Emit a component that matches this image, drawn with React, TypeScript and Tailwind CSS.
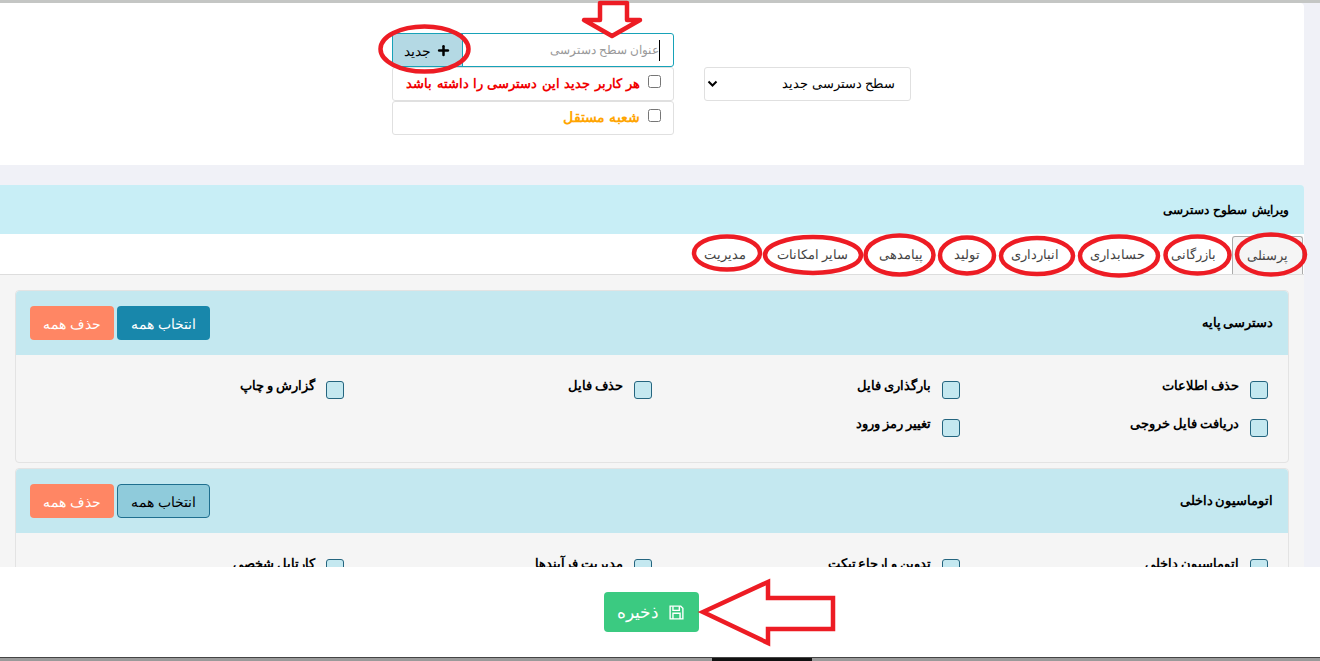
import { Plus } from 'lucide-react'

const rows = [
  ['حذف اطلاعات', 'بارگذاری فایل', 'حذف فایل', 'گزارش و چاپ'],
  ['دریافت فایل خروجی', 'تغییر رمز ورود'],
]
const rows2 = [['اتوماسیون داخلی', 'تدوین و ارجاع تیکت', 'مدیریت فرآیندها', 'کارتابل شخصی']]
const tabs = ['پرسنلی', 'بازرگانی', 'حسابداری', 'انبارداری', 'تولید', 'پیامدهی', 'سایر امکانات', 'مدیریت']

function PermissionCard({ title, items, soft }: { title: string; items: string[][]; soft?: boolean }) {
  return (
    <div className="border border-[#e3e3e3] rounded-[4px] bg-[#f5f5f5] mb-[5px]">
      <div className="h-[64px] bg-[#c4e8f0] rounded-t-[4px] flex items-center justify-between pr-[15px] pl-[14px]">
        <span className="text-[12.5px] font-bold text-black [word-spacing:-1px]">{title}</span>
        <div className="flex gap-[3px]">
          <button className={`h-[34px] w-[93px] rounded-[4px] text-[14px] ${soft ? 'bg-[#8fcbdb] border border-[#1f6f8f] text-black' : 'bg-[#1887ab] text-white'}`}>انتخاب همه</button>
          <button className="h-[34px] w-[84px] rounded-[4px] bg-[#ff8664] text-white text-[14px]">حذف همه</button>
        </div>
      </div>
      <div className="pr-[20px] pt-[26px] h-[107px]">
        {items.map((row, i) => (
          <div key={i} className="grid grid-cols-[repeat(4,308px)] h-[38px]">
            {row.map(label => (
              <label key={label} className="flex items-start gap-[11px]">
                <span className="w-[18px] h-[18px] rounded-[3px] border border-[#24657f] bg-[#c4e8f0] shrink-0" />
                <span className="text-[12.5px] font-bold text-black leading-[18px] -mt-[4px] [word-spacing:-0.5px]">{label}</span>
              </label>
            ))}
          </div>
        ))}
      </div>
    </div>
  )
}

export default function App() {
  return (
    <div dir="rtl" className="relative h-[661px] overflow-hidden bg-[#f0f1f7]" style={{ fontFamily: '"Noto Sans", sans-serif' }}>
      <div className="h-[3px] bg-[#c4c6c4]" />
      <div className="w-[1304px] h-[162px] bg-white mr-auto rounded-tr-[4px]" dir="ltr">
        <div className="flex items-start pl-[392px] pt-[30px] gap-[30px]">
          <div className="w-[282px]" dir="rtl">
            <div className="h-[34px] border border-[#17a2b8] rounded-[3px] flex items-center justify-between overflow-hidden">
              <span className="flex items-center pr-[13px]">
                <span className="w-[1px] h-[21px] bg-black" />
                <span className="text-[12px] text-[#999]">عنوان سطح دسترسی</span>
              </span>
              <button className="h-full w-[70px] bg-[#b4d9e4] border-r border-[#17a2b8] text-[14px] text-black flex items-center justify-center gap-[5px]">
                <Plus size={15} strokeWidth={4} />
                جدید
              </button>
            </div>
            <div className="h-[34px] border border-[#e0e0e0] rounded-[3px] flex items-start gap-[8px] pr-[12px] pt-[7px]">
              <input type="checkbox" className="w-[13px] h-[13px] m-0" />
              <span className="text-[13px] font-bold text-[#f00000] leading-[16px] whitespace-nowrap [word-spacing:1px]">هر کاربر جدید این دسترسی را داشته باشد</span>
            </div>
            <div className="h-[34px] border border-[#e0e0e0] rounded-[3px] flex items-start gap-[8px] pr-[12px] pt-[7px]">
              <input type="checkbox" className="w-[13px] h-[13px] m-0" />
              <span className="text-[14px] font-bold text-[#ffa500] leading-[16px]">شعبه مستقل</span>
            </div>
          </div>
          <div className="w-[207px] h-[34px] mt-[34px] border border-[#e0e0e0] rounded-[3px] flex items-center justify-between pr-[15px] pl-[2px]" dir="rtl">
            <span className="text-[12.75px] text-black">سطح دسترسی جدید</span>
            <svg width="11" height="8" viewBox="0 0 11 8"><path d="M1.5 1.5l4 4 4-4" fill="none" stroke="#000" strokeWidth="2" /></svg>
          </div>
        </div>
      </div>
      <div className="w-[1304px] mr-auto mt-[20px]">
        <div className="h-[49px] bg-[#c8eef6] rounded-tr-[4px] flex items-center pr-[15px] text-[12px] font-bold text-black [word-spacing:1.5px]">ویرایش سطوح دسترسی</div>
        <div className="h-[41px] bg-white border-b border-[#ddd] flex items-end pr-[1px] gap-[1px]">
          {tabs.map((t, i) => (
            <span
              key={t}
              className={`h-[38px] flex items-center text-[13px] text-[#444] ${
                i === 0
                  ? 'px-[14px] bg-[#f5f5f5] border border-b-0 border-[#aaa] rounded-t-[3px]'
                  : i === 1
                    ? 'pr-[15px] pl-[10px]'
                    : 'px-[15px]'
              }`}
            >
              {t}
            </span>
          ))}
        </div>
        <div className="bg-[#f5f5f5] px-[15px] pt-[15px]">
          <PermissionCard title="دسترسی پایه" items={rows} />
          <PermissionCard title="اتوماسیون داخلی" items={rows2} soft />
        </div>
      </div>

      <div className="absolute left-0 right-0 top-[567px] h-[90px] bg-white flex items-center justify-center pr-[18px]">
        <button className="w-[95px] h-[40px] rounded-[4px] bg-[#3bca81] text-white text-[17px] flex items-center justify-center gap-[9px]">
          <svg width="17" height="17" viewBox="0 0 24 24" fill="none" stroke="currentColor" strokeWidth="2"><path d="M3 3h15l3 3v15H3z" /><path d="M7 3v6h9V3M7 21v-8h10v8" /></svg>
          ذخیره
        </button>
      </div>
      <div className="absolute left-0 right-0 top-[657px] h-[4px] bg-[#9a9a9a] border-t border-[#444]">
        <div className="absolute left-[712px] w-[100px] top-0 bottom-0 bg-[#111]" />
      </div>

      <svg className="absolute inset-0 pointer-events-none" width="1320" height="661" fill="none" stroke="#ed1c24" strokeWidth="4.5">
        <path d="M600 3h27v17h13l-28 16-28-16h16z" strokeLinejoin="round" />
        <ellipse cx="424.5" cy="49" rx="44" ry="22.5" />
        <ellipse cx="1271" cy="254.5" rx="34" ry="20" />
        <ellipse cx="1197.5" cy="255" rx="32" ry="18.5" />
        <ellipse cx="1119" cy="256" rx="39" ry="19.5" />
        <ellipse cx="1037" cy="256" rx="36" ry="18" />
        <ellipse cx="967" cy="255.5" rx="27" ry="18" />
        <ellipse cx="899.5" cy="255" rx="34" ry="19.5" />
        <ellipse cx="813" cy="255" rx="48" ry="18" />
        <ellipse cx="727" cy="253" rx="33" ry="16.5" />
        <path d="M703 612l65-30v16h65v31h-65v14z" />
      </svg>
    </div>
  )
}
